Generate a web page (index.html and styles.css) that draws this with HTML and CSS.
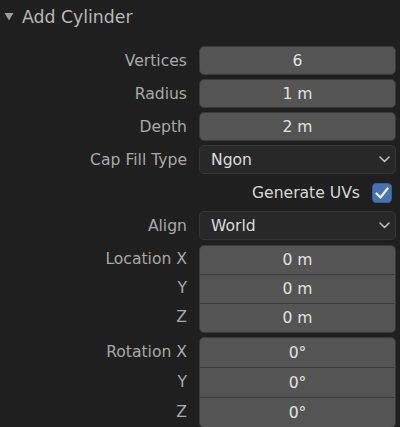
FILE: index.html
```html
<!DOCTYPE html>
<html>
<head>
<meta charset="utf-8">
<link rel="stylesheet" href="styles.css">
</head>
<body>
<div class="panel">
  <div class="header">
    <svg class="tri" width="10" height="9" viewBox="0 0 10 9"><path d="M0.5 1 L9.5 1 L5 8.5 Z" fill="#9b9b9b"/></svg>
    <span class="title">Add Cylinder</span>
  </div>
  <div class="body">
    <div class="row"><div class="label">Vertices</div><div class="num single">6</div></div>
    <div class="row"><div class="label">Radius</div><div class="num single">1 m</div></div>
    <div class="row"><div class="label">Depth</div><div class="num single">2 m</div></div>
    <div class="row"><div class="label">Cap Fill Type</div><div class="menu"><span>Ngon</span><svg width="11" height="7" viewBox="0 0 11 7"><path d="M1 1 L5.5 5.5 L10 1" fill="none" stroke="#bdbdbd" stroke-width="1.6" stroke-linecap="round" stroke-linejoin="round"/></svg></div></div>
    <div class="row checkrow"><span class="checklabel">Generate UVs</span><span class="check"><svg width="20" height="20" viewBox="0 0 20 20"><path d="M4.5 10.5 L8.5 14.5 L15.5 5.5" fill="none" stroke="#f2f2f2" stroke-width="2.2" stroke-linecap="round" stroke-linejoin="round"/></svg></span></div>
    <div class="row"><div class="label">Align</div><div class="menu"><span>World</span><svg width="11" height="7" viewBox="0 0 11 7"><path d="M1 1 L5.5 5.5 L10 1" fill="none" stroke="#bdbdbd" stroke-width="1.6" stroke-linecap="round" stroke-linejoin="round"/></svg></div></div>
    <div class="group loc">
      <div class="labels">
        <div class="glabel">Location X</div>
        <div class="glabel">Y</div>
        <div class="glabel">Z</div>
      </div>
      <div class="stack">
        <div class="num">0 m</div>
        <div class="num">0 m</div>
        <div class="num">0 m</div>
      </div>
    </div>
    <div class="group rot">
      <div class="labels">
        <div class="glabel">Rotation X</div>
        <div class="glabel">Y</div>
        <div class="glabel">Z</div>
      </div>
      <div class="stack">
        <div class="num">0°</div>
        <div class="num">0°</div>
        <div class="num">0°</div>
      </div>
    </div>
  </div>
</div>
</body>
</html>
```
FILE: styles.css
```css
html, body {
  margin: 0;
  padding: 0;
  background: #1f1f1f;
}
body {
  width: 400px;
  height: 427px;
  overflow: hidden;
  font-family: "DejaVu Sans", sans-serif;
  font-size: 15.6px;
}
.panel {
  width: 400px;
}
.header {
  display: flex;
  align-items: center;
  height: 33px;
  padding-left: 4px;
}
.tri {
  display: block;
  margin-top: -1px;
}
.title {
  margin-left: 8px;
  font-size: 17.3px;
  color: #b8b8b8;
}
.body {
  display: flex;
  flex-direction: column;
  gap: 4px;
  padding-top: 13px;
}
.row {
  display: grid;
  grid-template-columns: 199px 197px;
  height: 29px;
  align-items: center;
}
.label, .glabel {
  text-align: right;
  padding-right: 12px;
  color: #a9a9a9;
}
.num {
  height: 29px;
  box-sizing: border-box;
  display: flex;
  align-items: center;
  justify-content: center;
  background: #545454;
  color: #e2e2e2;
}
.num.single {
  border: 1px solid #3a3a3a;
  border-radius: 5px;
}
.menu {
  height: 29px;
  box-sizing: border-box;
  display: flex;
  align-items: center;
  justify-content: space-between;
  padding: 0 5px 0 11px;
  background: #282828;
  border: 1px solid #363636;
  border-radius: 5px;
  color: #dcdcdc;
}
.checkrow {
  display: flex;
  justify-content: flex-end;
  padding-right: 8px;
}
.checklabel {
  color: #d8d8d8;
  margin-right: 12px;
}
.check {
  width: 20px;
  height: 20px;
  box-sizing: border-box;
  background: #4772b3;
  border: 1px solid #3b5d92;
  border-radius: 4px;
  display: flex;
  align-items: center;
  justify-content: center;
}
.check svg {
  display: block;
  margin: -1px;
}
.group {
  display: grid;
  grid-template-columns: 199px 197px;
}
.group.loc {
  margin-top: 1px;
}
.labels {
  display: flex;
  flex-direction: column;
}
.glabel {
  height: 29px;
  line-height: 29px;
}
.rot .glabel {
  height: 30px;
  line-height: 30px;
}
.stack {
  display: flex;
  flex-direction: column;
  border: 1px solid #3a3a3a;
  border-radius: 5px;
  overflow: hidden;
  background: #3a3a3a;
  gap: 1px;
}
.stack .num {
  height: 28px;
}
.rot .stack .num {
  height: 29px;
}
```
